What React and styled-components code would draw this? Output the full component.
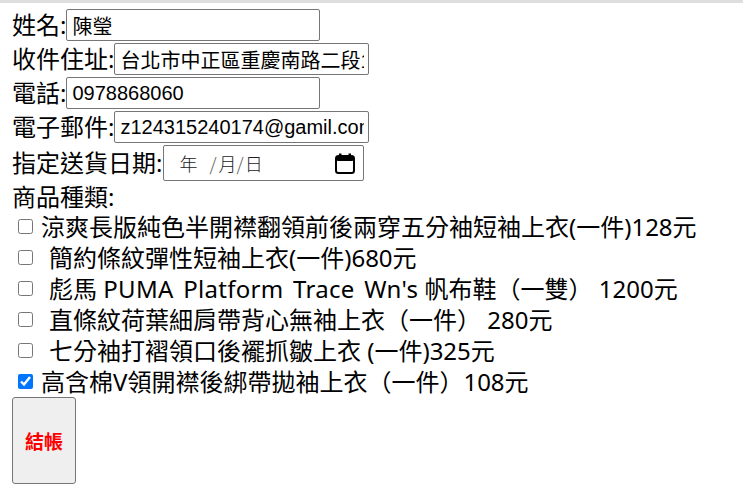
import React from "react";
import styled, { createGlobalStyle } from "styled-components";

const Global = createGlobalStyle`
  html, body { margin: 0; padding: 0; background: #fff; }
  body { font-family: "Noto Sans", "Noto Sans CJK TC", sans-serif; color: #000; }
`;

const TopRule = styled.div`
  height: 3px;
  background: #dedede;
`;

const Form = styled.form`
  display: flex;
  flex-direction: column;
  padding: 5px 12px 0 12px;
`;

const FieldRow = styled.div`
  display: flex;
  align-items: center;
  height: ${(p) => p.$h || 34}px;
`;

const Label = styled.span`
  font-family: "Noto Sans", "Noto Sans CJK TC", sans-serif;
  font-size: 24px;
  line-height: 1;
  margin-right: ${(p) => p.$gap || 0}px;
`;

const TextInput = styled.input`
  box-sizing: border-box;
  width: ${(p) => p.$w || 254}px;
  height: 32px;
  border: 1px solid #767676;
  border-radius: 2px;
  padding: 0 4px 0 5px;
  font-family: "Liberation Sans", "Noto Sans CJK TC", sans-serif;
  font-size: 20px;
  color: #000;
  background: #fff;
  outline: none;
`;

const DateField = styled.div`
  box-sizing: border-box;
  width: 201px;
  height: 36px;
  border: 1px solid #767676;
  border-radius: 2px;
  display: flex;
  align-items: center;
  justify-content: space-between;
  padding: 0 8px 0 15px;
  font-family: "Noto Sans CJK TC", sans-serif;
  font-weight: 300;
  font-size: 18px;
  color: #222;
`;

const DateSegs = styled.span`
  display: flex;
  align-items: center;
`;

const Seg = styled.span`
  margin-right: ${(p) => p.$mr || 0}px;
  color: ${(p) => (p.$sep ? "#555" : "#222")};
`;

const SectionTitle = styled.div`
  font-family: "Noto Sans", "Noto Sans CJK TC", sans-serif;
  font-size: 24px;
  line-height: 29px;
  height: 29px;
`;

const ItemRow = styled.label`
  display: flex;
  align-items: center;
  height: 31px;
  font-family: "Noto Sans", "Noto Sans CJK TC", sans-serif;
  font-size: 24px;
  white-space: pre;
`;

const Check = styled.input`
  width: 15px;
  height: 15px;
  margin: 0 8px 0 6px;
  flex: none;
`;

const ItemText = styled.span`
  padding-left: ${(p) => (p.$indent ? 8 : 0)}px;
  line-height: 31px;
`;

const Latin = styled.span`
  word-spacing: 3px;
  letter-spacing: 0.3px;
`;

const Checkout = styled.button`
  align-self: flex-start;
  width: 64px;
  height: 87px;
  background: #efefef;
  border: 1px solid #767676;
  border-radius: 3px;
  color: #ff0000;
  font-family: "Noto Sans CJK TC", sans-serif;
  font-weight: 700;
  font-size: 19px;
  padding: 0;
`;

const CalendarIcon = () => (
  <svg width="20" height="21" viewBox="0 0 20 21" aria-hidden="true">
    <rect x="1" y="3" width="18" height="17" rx="2.5" fill="none" stroke="#000" strokeWidth="2" />
    <rect x="1" y="3" width="18" height="5" rx="2" fill="#000" />
    <rect x="4" y="0.5" width="2.5" height="3.5" fill="#000" />
    <rect x="13.5" y="0.5" width="2.5" height="3.5" fill="#000" />
  </svg>
);

const items = [
  { text: "涼爽長版純色半開襟翻領前後兩穿五分袖短袖上衣(一件)128元", indent: false, checked: false },
  { text: "簡約條紋彈性短袖上衣(一件)680元", indent: true, checked: false },
  { text: ["彪馬 ", "PUMA Platform Trace Wn's", " 帆布鞋（一雙） 1200元"], indent: true, checked: false },
  { text: "直條紋荷葉細肩帶背心無袖上衣（一件） 280元", indent: true, checked: false },
  { text: "七分袖打褶領口後襬抓皺上衣 (一件)325元", indent: true, checked: false },
  { text: "高含棉V領開襟後綁帶拋袖上衣（一件）108元", indent: false, checked: true },
];

export default function App() {
  return (
    <>
      <Global />
      <TopRule />
      <Form onSubmit={(e) => e.preventDefault()}>
        <FieldRow>
          <Label>姓名:</Label>
          <TextInput $w={254} defaultValue="陳瑩" />
        </FieldRow>
        <FieldRow>
          <Label>收件住址:</Label>
          <TextInput $w={255} defaultValue="台北市中正區重慶南路二段12號" />
        </FieldRow>
        <FieldRow>
          <Label>電話:</Label>
          <TextInput $w={254} defaultValue="0978868060" />
        </FieldRow>
        <FieldRow>
          <Label>電子郵件:</Label>
          <TextInput $w={255} defaultValue="z124315240174@gamil.com" />
        </FieldRow>
        <FieldRow $h={38}>
          <Label $gap={1}>指定送貨日期:</Label>
          <DateField>
            <DateSegs>
              <Seg $mr={12}>年</Seg>
              <Seg $sep $mr={2}>/</Seg>
              <Seg $mr={0}>月</Seg>
              <Seg $sep $mr={1}>/</Seg>
              <Seg>日</Seg>
            </DateSegs>
            <CalendarIcon />
          </DateField>
        </FieldRow>
        <SectionTitle>商品種類:</SectionTitle>
        {items.map((it, i) => (
          <ItemRow key={i}>
            <Check type="checkbox" defaultChecked={it.checked} />
            <ItemText $indent={it.indent}>
              {Array.isArray(it.text) ? (
                <>
                  {it.text[0]}
                  <Latin>{it.text[1]}</Latin>
                  {it.text[2]}
                </>
              ) : (
                it.text
              )}
            </ItemText>
          </ItemRow>
        ))}
        <Checkout type="submit">結帳</Checkout>
      </Form>
    </>
  );
}
